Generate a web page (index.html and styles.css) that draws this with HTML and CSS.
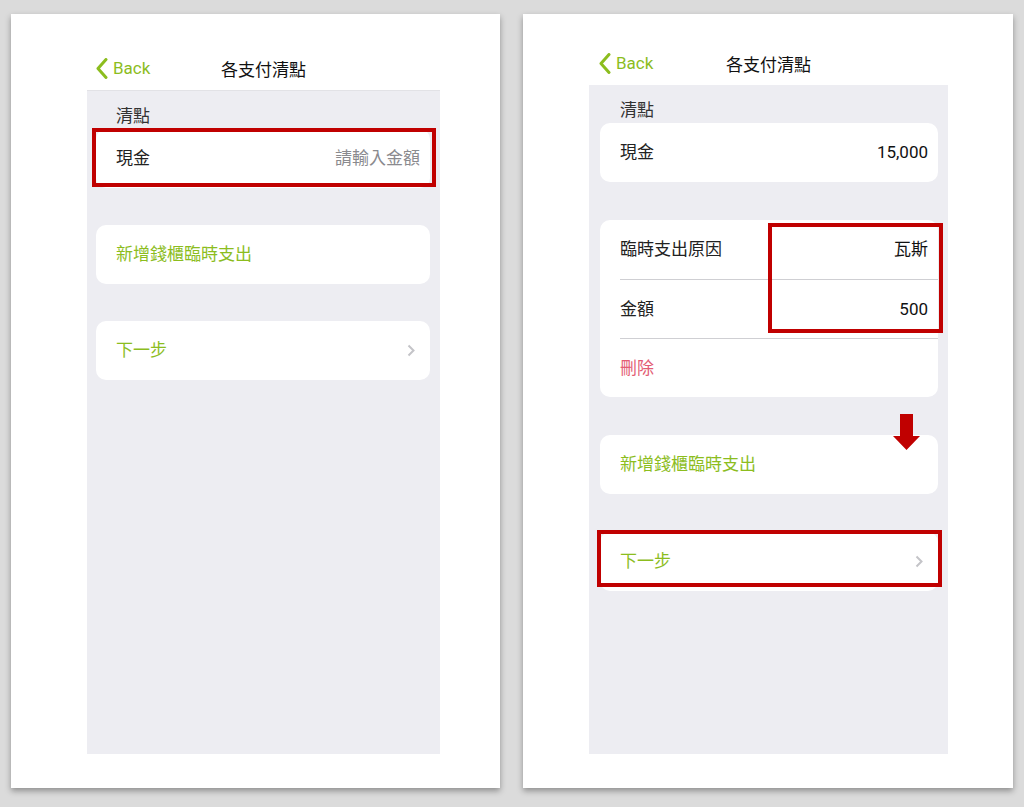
FILE: index.html
```html
<!DOCTYPE html>
<html lang="zh-Hant">
<head>
    <meta charset="UTF-8">
    <meta name="viewport" content="width=device-width, initial-scale=1.0">
    <title>各支付清點</title>
    <link rel="stylesheet" href="styles.css">
</head>
<body>
<div class="sheet sheet-left">
    <div class="nav">
        <a class="back" href="#">
            <svg width="12" height="21" viewBox="0 0 12 21"><polyline points="10,1.5 2,10.5 10,19.5" fill="none" stroke="#8cbd1e" stroke-width="3" stroke-linecap="round" stroke-linejoin="round"/></svg>
            <span>Back</span>
        </a>
        <div class="title">各支付清點</div>
        <div></div>
    </div>
    <div class="screen">
        <div class="section-label">清點</div>
        <div class="list">
            <div class="card">
                <div class="row">
                    <span class="label">現金</span>
                    <span class="placeholder">請輸入金額</span>
                </div>
                <div class="mark mark-cash"></div>
            </div>
            <div class="card">
                <div class="row"><span class="action">新增錢櫃臨時支出</span></div>
            </div>
            <div class="card">
                <div class="row row-link">
                    <span class="action">下一步</span>
                    <svg class="chevron" width="8" height="13" viewBox="0 0 8 13"><polyline points="1.5,1.5 6.5,6.5 1.5,11.5" fill="none" stroke="#c4c4c8" stroke-width="2"/></svg>
                </div>
            </div>
        </div>
    </div>
</div>

<div class="sheet sheet-right">
    <div class="nav">
        <a class="back" href="#">
            <svg width="12" height="21" viewBox="0 0 12 21"><polyline points="10,1.5 2,10.5 10,19.5" fill="none" stroke="#8cbd1e" stroke-width="3" stroke-linecap="round" stroke-linejoin="round"/></svg>
            <span>Back</span>
        </a>
        <div class="title">各支付清點</div>
        <div></div>
    </div>
    <div class="screen">
        <div class="section-label">清點</div>
        <div class="list">
            <div class="card">
                <div class="row">
                    <span class="label">現金</span>
                    <span class="value">15,000</span>
                </div>
            </div>
            <div class="card">
                <div class="row">
                    <span class="label">臨時支出原因</span>
                    <span class="value">瓦斯</span>
                </div>
                <div class="row">
                    <span class="label">金額</span>
                    <span class="value">500</span>
                </div>
                <div class="row"><span class="delete">刪除</span></div>
                <div class="mark mark-expense"></div>
            </div>
            <div class="card">
                <div class="row"><span class="action">新增錢櫃臨時支出</span></div>
                <svg class="arrow" width="27" height="36" viewBox="0 0 27 36"><polygon points="7,0 20,0 20,22 27,22 13.5,36 0,22 7,22" fill="#c00000"/></svg>
            </div>
            <div class="card">
                <div class="row row-link">
                    <span class="action">下一步</span>
                    <svg class="chevron" width="8" height="13" viewBox="0 0 8 13"><polyline points="1.5,1.5 6.5,6.5 1.5,11.5" fill="none" stroke="#c4c4c8" stroke-width="2"/></svg>
                </div>
                <div class="mark mark-next"></div>
            </div>
        </div>
    </div>
</div>
</body>
</html>
```

FILE: styles.css
```css
/* General Styles */
body {
    margin: 0;
    height: 807px;
    box-sizing: border-box;
    padding: 14px 11px 19px;
    display: flex;
    gap: 23px;
    background: #dbdbdb;
    font-family: 'Roboto', 'Noto Sans CJK TC', sans-serif;
    font-size: 17px;
    color: #222;
    overflow: hidden;
}

/* White sheets holding each phone screen */
.sheet {
    display: flex;
    flex-direction: column;
    box-sizing: border-box;
    background: #fff;
    box-shadow: 0 3px 6px rgba(0, 0, 0, 0.35);
}

.sheet-left {
    width: 489px;
    padding: 32px 60px 34px 76px;
}

.sheet-right {
    width: 490px;
    padding: 27px 65px 34px 66px;
}

/* Navigation bar */
.nav {
    height: 44px;
    display: grid;
    grid-template-columns: 1fr auto 1fr;
    align-items: center;
}

.back {
    display: flex;
    align-items: center;
    gap: 5px;
    padding-left: 9px;
    color: #8cbd1e;
    text-decoration: none;
    line-height: 1;
}

.sheet-right .back {
    padding-left: 10px;
}

.title {
    color: #111;
}

/* Screen */
.screen {
    flex: 1;
    background: #ededf2;
    border-top: 1px solid #e2e2e6;
    padding: 0 10px 0 9px;
}

.sheet-right .screen {
    border-top: none;
    padding-left: 11px;
}

.section-label {
    height: 38px;
    box-sizing: border-box;
    padding: 15px 0 0 20px;
    line-height: 20px;
    color: #333;
}

.list {
    display: flex;
    flex-direction: column;
    gap: 37px;
}

.sheet-right .list {
    gap: 38px;
}

.card {
    position: relative;
    background: #fff;
    border-radius: 10px;
}

.row {
    height: 59px;
    box-sizing: border-box;
    margin-left: 20px;
    padding-right: 10px;
    display: flex;
    align-items: center;
    justify-content: space-between;
    line-height: 1;
}

.row + .row {
    border-top: 1px solid #cfcfd3;
}

.row-link {
    padding-right: 15px;
}

.placeholder {
    color: #8a8a8e;
}

.value {
    color: #111;
}

.action {
    color: #8cbd1e;
}

.delete {
    color: #e35d74;
}

/* Red annotation boxes */
.mark {
    position: absolute;
    border: 4px solid #c00000;
    box-sizing: border-box;
    pointer-events: none;
}

.mark-cash {
    top: -1px;
    left: -4px;
    right: -6px;
    height: 59px;
}

.mark-expense {
    top: 3px;
    left: 168px;
    right: -5px;
    height: 110px;
}

.mark-next {
    top: -2px;
    left: -3px;
    right: -4px;
    height: 57px;
}

.arrow {
    position: absolute;
    top: -21px;
    right: 18px;
}
```
